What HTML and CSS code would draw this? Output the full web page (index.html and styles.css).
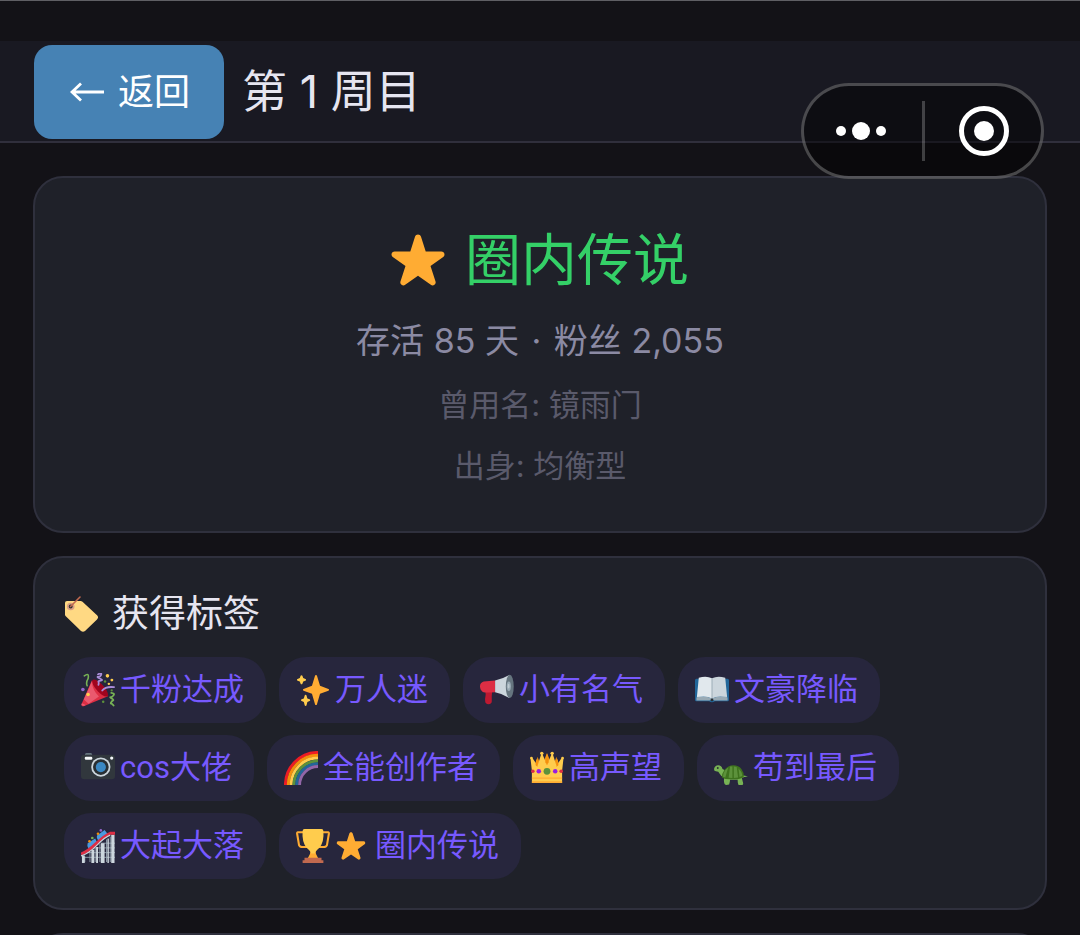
FILE: index.html
```html
<!DOCTYPE html>
<html lang="zh-CN">
<head>
<meta charset="utf-8">
<meta name="viewport" content="width=device-width, initial-scale=1">
<title>第 1 周目</title>
<link rel="stylesheet" href="styles.css">
</head>
<body>
<svg class="defs" aria-hidden="true">
  <symbol id="star" viewBox="1 2 34 33"><path fill="#ffac33" d="M27.287 34.627c-.404 0-.806-.124-1.152-.371L18 28.422l-8.135 5.834c-.343.247-.743.371-1.147.371-.4 0-.8-.12-1.14-.366-.68-.492-.966-1.36-.711-2.16l3.194-9.779L2 16.562c-.681-.494-.963-1.37-.702-2.169.262-.8 1.01-1.342 1.85-1.346l9.966-.014L16.14 3.62C16.4 2.82 17.16 2.279 18 2.279s1.6.541 1.86 1.341l3.042 9.413 9.949.014c.841.004 1.59.546 1.851 1.346.262.8-.021 1.675-.701 2.169l-8.061 5.761 3.188 9.778c.257.799-.03 1.667-.709 2.16-.339.24-.738.366-1.132.366z"/></symbol>
</svg>
<div class="screen">
  <header class="header">
    <button class="back" type="button"><svg class="arrow" viewBox="0 0 34 20" aria-hidden="true"><path d="M34 10H2M11 1.500 2 10l9 8.500" fill="none" stroke="currentColor" stroke-width="2.800"/></svg>返回</button>
    <h1 class="page-title">第 1 周目</h1>
  </header>

  <div class="capsule">
    <button class="capsule-btn more" type="button" aria-label="更多"><svg width="52" height="52" viewBox="0 0 52 52" fill="#fff"><circle cx="6" cy="26" r="5"/><circle cx="26" cy="26" r="9"/><circle cx="46" cy="26" r="5"/></svg></button>
    <span class="capsule-line"></span>
    <button class="capsule-btn close" type="button" aria-label="关闭"><svg width="52" height="52" viewBox="0 0 52 52"><circle cx="26" cy="26" r="22.500" fill="none" stroke="#fff" stroke-width="5"/><circle cx="26" cy="26" r="10" fill="#fff"/></svg></button>
  </div>

  <main class="content">
    <section class="card summary">
      <h2 class="result"><svg class="result-star" aria-hidden="true"><use href="#star"/></svg>圈内传说</h2>
      <p class="stats">存活 85 天 <span class="dot">·</span> 粉丝 2,055</p>
      <p class="detail">曾用名: 镜雨门</p>
      <p class="detail">出身: 均衡型</p>
    </section>

    <section class="card tags">
      <h2 class="tags-title"><svg class="tag-icon" viewBox="0 0 36 36" aria-hidden="true">
        <path fill="#ffd983" d="M3 5Q1 5 1 7v11.500q0 1 .8 1.800L17 35q2 1.500 4 0L33 23.500q2-2 .3-4L18.500 5.800q-.8-.8-2-.8z"/>
        <circle cx="6.700" cy="10.500" r="3.800" fill="#d99e82"/><circle cx="6.700" cy="10.500" r="1.900" fill="#292f33"/>
        <path d="M6.500 10.500 16 1" stroke="#c1694f" stroke-width="1.600" stroke-linecap="round"/></svg>获得标签</h2>
      <ul class="chips">
        <li class="chip"><svg class="emoji" viewBox="0 0 36 36" aria-hidden="true">
          <path fill="#dd2e44" d="M11.500 8 .6 32.800Q0 35.500 2.800 35.200L28.500 24.500Z"/>
          <path fill="#ea596e" d="M11.500 9 3 28 8 32.500 19 25Q12 18 11.500 9M1 32l-.6 2 2.600 1 2-1z"/>
          <path fill="#a0041e" d="M12 7.500Q14.500 5 21.500 11.500T28.800 24.300Q25 26.500 18 19.500T12 7.500"/>
          <path d="M3.500 3Q9-1 7.500 6Q5 10 6.500 13.500" fill="none" stroke="#77b255" stroke-width="1.700" stroke-linecap="round"/>
          <path d="M18 1.500q4-2.500 3.500 0t-3 2.500 1.500 1.800 1 2.200-2.500 1.500 0 3" fill="none" stroke="#aa8dd8" stroke-width="1.900" stroke-linecap="round"/>
          <path d="M22.500 18.500Q26 14 35 15" fill="none" stroke="#aa8dd8" stroke-width="1.900" stroke-linecap="round"/>
          <path d="M32 21q4 .5 2.500 2.500t-3 2 1 1.500 1.500 2-2 2 0 1.500 2.500 2" fill="none" stroke="#77b255" stroke-width="1.900" stroke-linecap="round"/>
          <g fill="#ffcc4d"><circle cx="28" cy="3" r="1.900"/><circle cx="32.700" cy="7.500" r="1.500"/><circle cx="29.500" cy="11.500" r="1.300"/><circle cx="7.500" cy="22.700" r="1.900"/></g>
          <g fill="#5c913b"><circle cx="25.500" cy="9" r="1.300"/><circle cx="32.500" cy="18.500" r="1.200"/><circle cx="23.500" cy="30.500" r="1.300"/></g><circle cx="2" cy="17.500" r="1.900" fill="#9266cc"/></svg>千粉达成</li>
        <li class="chip"><svg class="emoji" viewBox="0 0 36 36" aria-hidden="true">
          <path fill="#ffac33" d="M34.347 16.893l-8.899-3.294-3.323-10.891c-.128-.42-.517-.708-.956-.708-.439 0-.828.288-.956.708l-3.322 10.891-8.900 3.294c-.393.146-.653.519-.653.938 0 .418.26.793.653.938l8.895 3.293 3.324 11.223c.126.424.516.715.959.715.442 0 .833-.291.959-.716l3.324-11.223 8.896-3.293c.391-.144.652-.518.652-.937 0-.418-.261-.792-.653-.938z"/>
          <path fill="#ffcc4d" d="M14.347 27.894l-2.314-.856-.9-3.300c-.118-.436-.513-.738-.964-.738-.451 0-.846.302-.965.737l-.9 3.300-2.313.856c-.393.146-.653.52-.653.938 0 .418.26.793.653.938l2.301.853.907 3.622c.112.444.511.756.97.756.459 0 .858-.312.97-.757l.907-3.622 2.301-.853c.393-.144.653-.519.653-.937 0-.418-.26-.793-.653-.937zM10.009 6.231l-2.364-.875-.876-2.365c-.145-.393-.519-.653-.938-.653-.418 0-.792.26-.938.653l-.875 2.365-2.365.875c-.393.146-.653.52-.653.938 0 .418.26.793.653.938l2.365.875.875 2.365c.146.393.52.653.938.653.418 0 .792-.26.938-.653l.875-2.365 2.365-.875c.393-.146.653-.52.653-.938 0-.418-.26-.792-.653-.938z"/></svg>万人迷</li>
        <li class="chip"><svg class="emoji" viewBox="0 0 36 36" aria-hidden="true">
          <path fill="#be1931" d="M5.500 17 13 19Q12 25 12.500 30q0 3-3.500 3t-3.500-3Q5 28 6 23z"/>
          <path fill="#dd2e44" d="M16 8 4 9Q0 10 0 14t3 6q2 1 13 .5z"/>
          <path fill="#ccd6dd" d="M16 8Q24 6 31 2v24.500Q24 22 16 20.500z"/>
          <ellipse cx="31.500" cy="14.200" rx="4.200" ry="12.400" fill="#66757f"/><ellipse cx="30.500" cy="14" rx="2.200" ry="5" fill="#99aab5"/><ellipse cx="30.300" cy="14" rx="1" ry="2.500" fill="#bdc9d0"/></svg>小有名气</li>
        <li class="chip"><svg class="emoji" viewBox="0 0 36 36" aria-hidden="true">
          <path fill="#269" d="M1.500 6h33q1.500 0 1.500 2v20q0 2-1.500 2H21q-3 2-6 0H1.500Q0 30 0 28V8q0-2 1.500-2"/>
          <path fill="#99aab5" d="M1.500 26 4 25q8-1 14 2 6-3 14-2l2.500 1v3H20.500q-2.500-1.500-5 0h-14z"/>
          <path fill="#e1e8ed" d="M4 5Q12 2.500 18 5.500V27Q12 23.500 2 25.500z"/><path fill="#ccd6dd" d="M32 5Q24 2.500 18 5.500V27Q24 23.500 34 25.500z"/>
          <path d="M18 5.500V27" stroke="#99aab5"/><circle cx="18" cy="28.500" r="1.500" fill="#292f33"/></svg>文豪降临</li>
        <li class="chip"><svg class="emoji" viewBox="0 0 36 36" aria-hidden="true">
          <path fill="#66757f" d="M5.500 2h5q1.500 0 1.500 3H4q0-3 1.500-3"/><rect y="4" width="36" height="26" rx="3.500" fill="#31373d"/>
          <rect x="4" y="6" width="8" height="3.200" rx="1.300" fill="#f5f8fa"/><circle cx="32.500" cy="7.500" r="1.700" fill="#f5f8fa"/>
          <circle cx="21" cy="17" r="10.200" fill="#ccd6dd"/><circle cx="21" cy="17" r="8.300" fill="#292f33"/><circle cx="21" cy="17" r="5.400" fill="#3b88c3"/></svg>cos大佬</li>
        <li class="chip"><svg class="emoji" viewBox="0 0 36 36" fill="none" stroke-width="3.100" aria-hidden="true">
          <path stroke="#ed1c24" d="M1.500 36A34.500 34.500 0 0 1 36 1.500"/><path stroke="#f4900c" d="M4.500 36A31.500 31.500 0 0 1 36 4.500"/><path stroke="#ffcc4d" d="M7.500 36A28.500 28.500 0 0 1 36 7.500"/><path stroke="#5c913b" d="M10.500 36A25.500 25.500 0 0 1 36 10.500"/><path stroke="#269" d="M13.500 36A22.500 22.500 0 0 1 36 13.500"/><path stroke="#9266a8" d="M16.500 36A19.500 19.500 0 0 1 36 16.500"/></svg>全能创作者</li>
        <li class="chip"><svg class="emoji" viewBox="0 0 36 36" aria-hidden="true">
          <path fill="#f4900c" d="M5 20 8 6l4 11 6-15 6 15 4-11 3 14z"/>
          <path fill="#ffcc4d" d="M2 34V21L.5 7.500l1.500-1 6 9 4-12.500h1L18 15l5-12h1l4 12.500 6-9 1.500 1L34 21v13z"/>
          <g fill="#ffcc4d"><circle cx="1.500" cy="7.500" r="1.400"/><circle cx="12.500" cy="2.500" r="1.800"/><circle cx="23.500" cy="2.500" r="1.800"/><circle cx="34.500" cy="7.500" r="1.400"/></g>
          <path fill="#ffac33" d="M7 8 5.500 14 8 16zm11-5-2 9 2 3 2-3zm11 5 1.500 6L28 16zM2 28h32v1.500H2zm0 4h32v2H2z"/><path fill="#f4900c" d="m7 8-1 7 2 2zm11-5-1.700 9L18 14l1.700-2zm11 5 1 7-2 2z"/>
          <circle cx="18" cy="21.500" r="3.600" fill="#5c913b"/><g fill="#9b1ce0"><circle cx="9.300" cy="21.500" r="2.400"/><circle cx="26.700" cy="21.500" r="2.400"/></g><g fill="#dd2e44"><circle cx="3" cy="21.500" r="1.900"/><circle cx="33" cy="21.500" r="1.900"/></g></svg>高声望</li>
        <li class="chip"><svg class="emoji" viewBox="0 0 36 36" aria-hidden="true">
          <path fill="#77b255" d="M9 19Q8 15 4.500 15T0 19q0 2.500 2 2.500 3 0 4 2.500t5 4q-1 3 0 6.500.3 1.500 2 1.500t3-.5q1-3 1-5h8q0 4 1 5.500h4q1.500-.5.500-3.500l-1-4q4-2 7.500-1Q33 26 31 26L15 22z"/>
          <path fill="#3e721d" d="M8.500 28Q8 24 11 20q4-5 9.500-5T29 19q3 4 2.500 8-1 3-11 3t-12-2"/>
          <path fill="#5c913b" d="M15 17.500 12 28l-2.500-.7Q9.500 23 12 20zM17 16.500h2.500V28.500l-4-.3zM21 16.500l3 .5 1.500 11-4.500.5zM26 18.500q4 4 4 8l-3 1z"/><circle cx="4" cy="18" r="1" fill="#292f33"/></svg>苟到最后</li>
        <li class="chip"><svg class="emoji" viewBox="0 0 36 36" aria-hidden="true">
          <path d="M9.500 24v11M15 20v15M27 11v24M31 8v27M20 16v19M4 29v6M1 30h35M6 25h30M14 20h22M21 15h15" stroke="#99aab5" stroke-width=".9"/>
          <path fill="#ccd6dd" d="M1 28h3v8H1zM11 22h3v14h-3zM21 15h4v21h-4zM32 6h3.500v30H32zM16 19h2v17h-2zM28 10h1.500v26H28z"/>
          <path fill="#4a9adf" d="m7 15 8-5 2 4L8 21q-2-3-1-6M17 7l8-6 3 4-9 8q-3-3-2-6"/>
          <path d="M0 26.500Q7 24 16 15.500T31 4.500h5" fill="none" stroke="#dd2e44" stroke-width="3"/>
          <path d="M0 28.500Q8 26 17 17T31 6.500" fill="none" stroke="#ccd6dd" stroke-width="1.200"/>
          <g fill="#f4900c"><circle cx="9" cy="13" r="1.400"/><circle cx="18" cy="5" r="1.400"/></g><g fill="#9266cc"><circle cx="21" cy="1.500" r="1.400"/></g><circle cx="12" cy="9.500" r="1.400" fill="#77b255"/></svg>大起大落</li>
        <li class="chip"><svg class="emoji" viewBox="0 0 36 36" aria-hidden="true">
          <path d="M8 3.500H2q-1 0-.8 1.500l2 12Q4 19 7 19h6M28 3.500h6q1 0 .8 1.500l-2 12Q32 19 29 19h-6" fill="none" stroke="#ffac33" stroke-width="2.200"/>
          <path fill="#ffac33" d="M15.500 22h5q0 5 3 9h-11q3-4 3-9"/><path fill="#ffcc4d" d="M7 2q0-2 2-2h18q2 0 2 2 1 12-4.500 18Q20 24 20 26h-4q0-2-4.500-6Q6 14 7 2"/>
          <path fill="#c1694f" d="M9 30.500h18v2.500h2v3H7v-3h2z"/></svg><svg class="chip-star" aria-hidden="true"><use href="#star"/></svg>圈内传说</li>
      </ul>
    </section>

    <section class="card next"></section>
  </main>
</div>
</body>
</html>
```

FILE: styles.css
```css
* {
  box-sizing: border-box;
}

body {
  margin: 0;
  background: #131217;
  color: #e6e5f0;
  font-family: Inter, "Noto Sans CJK SC", sans-serif;
}

h1, h2, p, ul {
  margin: 0;
  padding: 0;
  font-weight: 400;
}

button {
  border: 0;
  font: inherit;
  color: #fff;
}

.defs {
  position: absolute;
  width: 0;
  height: 0;
}

.screen {
  position: relative;
  height: 100vh;
  overflow: hidden;
  padding-top: 40px;
  border-top: 1px solid #5f5f64;
}

.header {
  display: flex;
  align-items: center;
  gap: 18px;
  padding: 4px 34px 2px;
  background: #191922;
  border-bottom: 2px solid #302f3c;
}

.back {
  display: flex;
  align-items: center;
  gap: 14px;
  height: 94px;
  padding: 0 34px 0 36px;
  border-radius: 18px;
  background: #4682b4;
  font-size: 36px;
  line-height: 50px;
}

.arrow {
  width: 34px;
  height: 20px;
}

.page-title {
  font-size: 45px;
  line-height: 64px;
}

.capsule {
  position: absolute;
  top: 82px;
  right: 36px;
  display: flex;
  align-items: center;
  width: 243px;
  height: 96px;
  border: 3px solid rgba(255, 255, 255, .25);
  border-radius: 48px;
  background: rgba(0, 0, 0, .45);
}

.capsule-btn {
  display: flex;
  flex: 1;
  align-items: center;
  justify-content: center;
  height: 100%;
  padding: 0;
  background: none;
}

.more {
  padding-right: 4px;
}

.close {
  padding-left: 2px;
}

.capsule-line {
  width: 3px;
  height: 60px;
  background: rgba(255, 255, 255, .22);
}

.content {
  display: flex;
  flex-direction: column;
  gap: 23px;
  padding: 33px;
}

.card {
  border: 2px solid #2f303d;
  border-radius: 30px;
  background: #1f2129;
}

.summary {
  display: flex;
  flex-direction: column;
  align-items: center;
  gap: 16px;
  padding: 42px 30px 43px;
}

.result {
  display: flex;
  align-items: center;
  gap: 20px;
  color: #34d067;
  font-size: 56px;
  line-height: 80px;
}

.result-star {
  width: 54px;
  height: 52px;
}

.stats {
  color: #8b8aa3;
  font-size: 34px;
  line-height: 50px;
}

.dot {
  margin: 0 3px;
}

.detail {
  color: #5a5a6b;
  font-size: 31px;
  line-height: 45px;
}

.tags {
  padding: 29px;
}

.tags-title {
  display: flex;
  align-items: center;
  gap: 12px;
  margin-bottom: 17px;
  font-size: 37px;
  line-height: 53px;
}

.tag-icon {
  width: 36px;
  height: 36px;
}

.chips {
  display: flex;
  flex-wrap: wrap;
  gap: 12px 13px;
  list-style: none;
}

.chip {
  display: flex;
  align-items: center;
  gap: 5px;
  height: 66px;
  padding: 0 22px 0 17px;
  border-radius: 27px;
  background: #27263d;
  color: #7759ff;
  font-family: Roboto, "Noto Sans CJK SC", sans-serif;
  font-size: 31px;
  line-height: 46px;
}

.emoji {
  width: 34px;
  height: 34px;
}

.chip-star {
  width: 30px;
  height: 28px;
  margin: 0 4px 0 1px;
}

.next {
  height: 200px;
}
```
